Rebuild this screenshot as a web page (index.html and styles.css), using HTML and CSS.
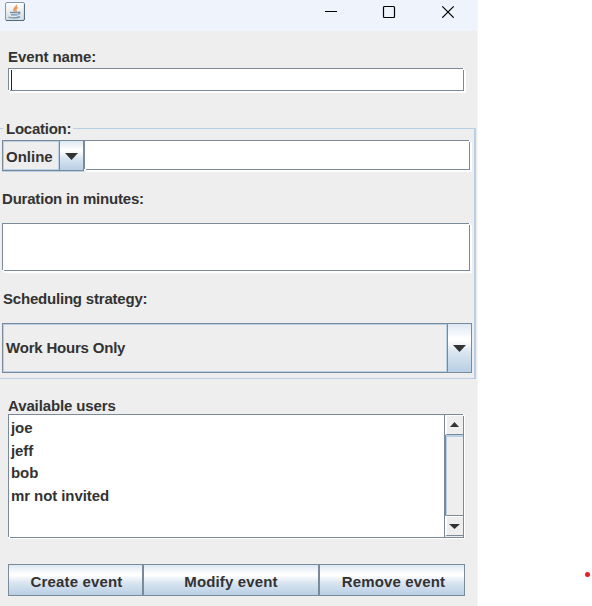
FILE: index.html
```html
<!DOCTYPE html>
<html lang="en">
<head>
<meta charset="utf-8">
<title>Event</title>
<link rel="stylesheet" href="styles.css">
</head>
<body>
<main class="window">
  <header class="titlebar">
    <svg class="app-icon" width="20" height="20" viewBox="0 0 20 20">
      <defs><linearGradient id="tile" x2="0" y2="1"><stop stop-color="#fff"/><stop offset="1" stop-color="#d5dbe0"/></linearGradient></defs>
      <rect x=".5" y=".5" width="19" height="18" rx="1.5" fill="url(#tile)" stroke="#8597a8"/>
      <path d="M1 18.5h18M19.4 2v16" stroke="#4f6d82" fill="none"/>
      <path d="M11.300 3c1.500 2-4.300 3.200-1.800 6.600M12.700 5.500c-3 1.200-2 2-1.400 4" stroke="#ed9650" stroke-width="1.500" fill="none"/>
      <path d="M5 10.500h8.500M6 12.800h6.500M13.500 10.300c2-.5 2 1.800-.5 2M3.500 15c3 1.400 9 1.200 11.500-.4" stroke="#7193ae" stroke-width="1.300" fill="none"/>
    </svg>
    <svg class="controls" width="132" height="14" viewBox="0 0 132 14" fill="none" stroke="#000">
      <path d="M1 7.500h12" />
      <rect x="59.500" y="2.500" width="11" height="11" rx="1" stroke-width="1.200"/>
      <path d="M118.300 2.300l11.400 11.400M129.700 2.300l-11.400 11.400" stroke-width="1.200"/>
    </svg>
  </header>

  <label class="label name-label">Event name:</label>
  <div class="field name-field"><i class="caret"></i></div>

  <section class="group">
    <div class="legend">Location:</div>
    <div class="location-row">
      <div class="combo small">
        <div class="value"><span>Online</span></div>
        <div class="drop"><svg width="13" height="7" viewBox="0 0 13 7"><path d="M0 0h13L6.500 7z" fill="#333"/></svg></div>
      </div>
      <div class="field place-field"></div>
    </div>
    <label class="label duration-label">Duration in minutes:</label>
    <div class="field duration-field"></div>
    <label class="label strategy-label">Scheduling strategy:</label>
    <div class="combo large">
      <div class="value"><span>Work Hours Only</span></div>
      <div class="drop"><svg width="13" height="7" viewBox="0 0 13 7"><path d="M0 0h13L6.500 7z" fill="#333"/></svg></div>
    </div>
  </section>

  <label class="label users-label">Available users</label>
  <div class="field users">
    <ul class="list"><li>joe</li><li>jeff</li><li>bob</li><li>mr not invited</li></ul>
    <div class="scroll">
      <div class="arrow up"><svg width="9" height="5" viewBox="0 0 9 5"><path d="M0 5h9L4.500 0z" fill="#333"/></svg></div>
      <div class="track"></div>
      <div class="arrow down"><svg width="11" height="5" viewBox="0 0 11 5"><path d="M0 0h11L5.500 5z" fill="#333"/></svg></div>
    </div>
  </div>

  <div class="buttons">
    <button>Create event</button>
    <button>Modify event</button>
    <button>Remove event</button>
  </div>
</main>
<i class="dot"></i>
</body>
</html>
```
FILE: styles.css
```css
* { box-sizing: border-box; }
body {
  margin: 0;
  height: 606px;
  overflow: hidden;
  background: #fff;
  color: #333;
  font: bold 15px/18px "Liberation Sans", Arial, sans-serif;
  white-space: nowrap;
}
svg { display: block; }
.window {
  width: 478px;
  height: 606px;
  background: #eee;
  border-right: 1px solid #f5f5f5;
  display: flex;
  flex-direction: column;
}
.titlebar {
  height: 31px;
  flex: none;
  padding: 2px 21px 0 5px;
  background: #eff3fb;
  display: flex;
  justify-content: space-between;
}
.controls { margin-top: 2px; }
.label { display: block; height: 18px; flex: none; letter-spacing: -.2px; }
.name-label { margin: 17px 0 2px 8px; letter-spacing: -.1px; }
.field {
  position: relative;
  background: #fff;
  border: 1px solid #7a8a99;
  box-shadow: 2px 2px 0 #fff;
  flex: none;
}
/* The bevel leaves its top-right and bottom-left corners open. */
.field::before, .field::after {
  content: "";
  position: absolute;
  width: 1px;
  height: 1px;
  background: #fff;
}
.field::before { right: -1px; top: -1px; height: 2px; }
.field::after { left: -1px; bottom: -1px; width: 2px; }
.name-field { width: 456px; height: 23px; margin-left: 8px; padding: 1px 2px; }
.caret { display: block; width: 1px; height: 20px; background: #222; }

.group {
  width: 476px;
  height: 251px;
  flex: none;
  margin-top: 37px;
  border: solid #b8cfe5;
  border-width: 1px 2px 1px 0;
  padding-left: 2px;
}
.legend {
  width: 70px;
  height: 18px;
  margin: -9px 0 2px 1px;
  padding-left: 3px;
  background: #eee;
  letter-spacing: -.25px;
}
.location-row { display: flex; }
.combo { display: flex; border: 1px solid #7a8a99; }
.value {
  flex: 1;
  display: flex;
  align-items: center;
  border: 1px solid #b8cfe5;
}
.drop {
  width: 24px;
  border-left: 1px solid #7a8a99;
  display: flex;
  align-items: center;
  justify-content: center;
  background: linear-gradient(#dde8f3, #fff 30%, #fff 34%, #dbe6f1 58%, #b8cfe5);
}
.small { width: 82px; height: 31px; box-shadow: 0 1px 0 #b8cfe5; clip-path: inset(0 0 -1px 0); }
.small .value { padding: 2px 0 0 2px; box-shadow: 0 2px 0 #eee; clip-path: inset(0); }
.place-field { width: 386px; height: 30px; }
.small .drop { padding-top: 1px; }
.duration-label { margin-top: 19px; }
.duration-field { width: 468px; height: 48px; margin-top: 15px; }
.strategy-label { margin: 19px 0 15px 1px; }
.large { width: 470px; height: 50px; }
.large .value { padding-left: 2px; letter-spacing: -.2px; }
.large .drop { padding-top: 1px; }

.users-label { margin: 18px 0 0 8px; height: 17px; letter-spacing: -.12px; }
.users {
  width: 456px;
  height: 124px;
  margin-left: 8px;
  display: flex;
  box-shadow: 1px 1px 0 #fff;
}
.list { flex: 1; margin: 0; padding: 2px 0 0 2px; list-style: none; letter-spacing: -.08px; }
.list li { height: 22.7px; line-height: 22px; }
.scroll {
  width: 19px;
  border-left: 1px solid #7a8a99;
  display: flex;
  flex-direction: column;
  background: #eee;
}
.arrow {
  height: 20px;
  display: flex;
  align-items: center;
  justify-content: center;
  padding-right: 2px;
  border: solid #fff;
  border-width: 1px 0 0 2px;
}
.up { border-bottom: 1px solid #7a8a99; padding-bottom: 1px; }
.down { border-bottom: 1px solid #7a8a99; margin-bottom: 1px; }
.track {
  flex: 1;
  border: solid #b8cfe5;
  border-width: 2px 0 0 1px;
  border-bottom: 1px solid #7a8a99;
  margin-left: 1px;
  box-shadow: -1px 0 0 #7a8a99;
}

.buttons {
  display: grid;
  grid-template-columns: 135px 176px 146px;
  width: 457px;
  height: 32px;
  margin: 26px 0 0 8px;
}
button {
  padding: 3px 0 0 2px;
  border: 1px solid #7a8a99;
  border-radius: 0;
  background: linear-gradient(#dde8f3, #fff 30%, #fff 34%, #dbe6f1 58%, #b8cfe5);
  color: inherit;
  font: inherit;
  letter-spacing: .15px;
}
button:nth-child(2) { padding-left: 0; }
button:nth-child(3) { padding-left: 3px; }
.dot {
  position: absolute;
  left: 585px;
  top: 572px;
  width: 5px;
  height: 5px;
  border-radius: 50%;
  background: #ed1c24;
}
```
